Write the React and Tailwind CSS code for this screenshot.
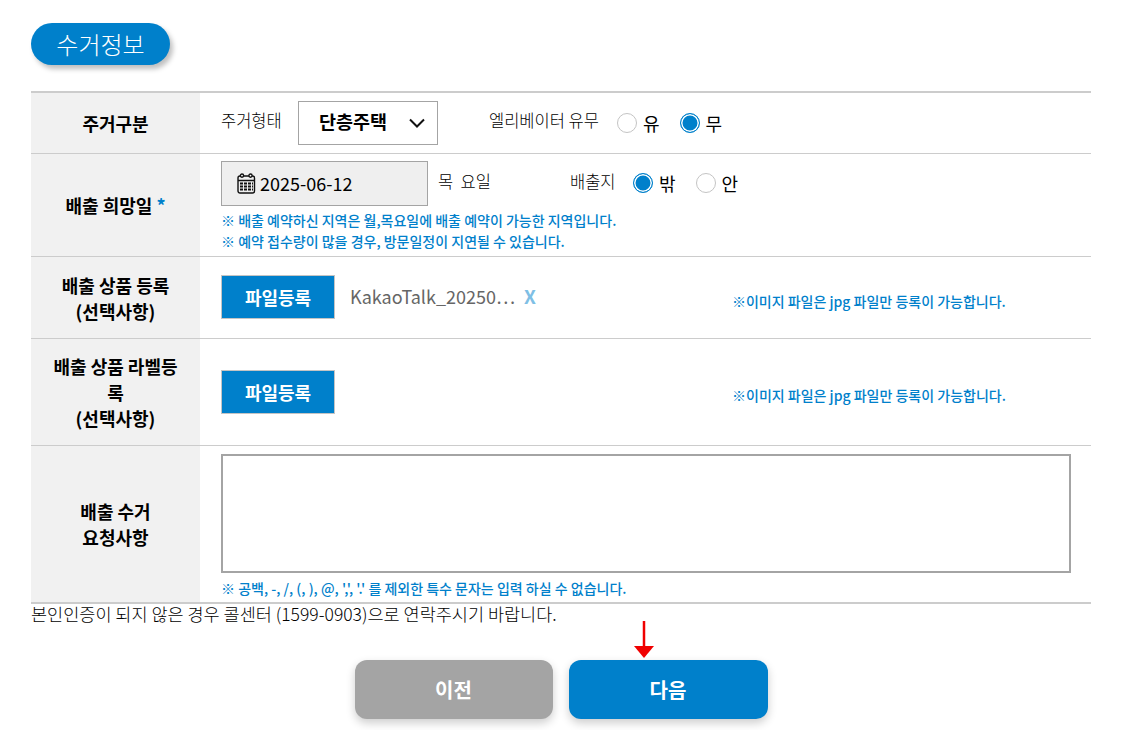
import React from 'react';

const CalendarIcon = () => (
  <svg width="19" height="21" viewBox="0 0 19 21" className="shrink-0" fill="none" stroke="#111" strokeWidth="1.4">
    <rect x="1" y="3" width="16.5" height="17" rx="2" />
    <circle cx="5" cy="2.6" r="1.6" fill="#fff" />
    <circle cx="13.5" cy="2.6" r="1.6" fill="#fff" />
    <path d="M1 7.5h16.5" strokeWidth="1.5" />
    <path d="M3 10.5h13M3 13.5h13M3 16.5h13" strokeWidth="1.8" strokeDasharray="3 1" />
  </svg>
);

const Radio = ({ checked, label }) => (
  <span className="flex items-center gap-[6px]">
    {checked ? (
      <span className="w-[20px] h-[20px] rounded-full border border-[#0080cb] bg-[#0080cb] shadow-[inset_0_0_0_1.5px_#fff]"></span>
    ) : (
      <span className="w-[20px] h-[20px] rounded-full border border-[#c4c4c4] bg-white"></span>
    )}
    <span className="text-[18px] text-black leading-none">{label}</span>
  </span>
);

const Row = ({ height, children, label, noBorder }) => (
  <div className={`flex ${height} ${noBorder ? '' : 'border-b border-[#cccccc]'}`}>
    <div className="w-[169px] shrink-0 bg-[#f1f1f1] flex items-center justify-center text-center text-[18px] leading-[26px] font-bold text-black px-[20px]">
      <div>{label}</div>
    </div>
    <div className="flex-1 min-w-0 pl-[21px]">{children}</div>
  </div>
);

const FileButton = () => (
  <button className="w-[114px] h-[44px] bg-[#0080cb] border border-[#c4c4c4] text-white text-[18px] font-bold">파일등록</button>
);

const Notice = ({ children, className }) => (
  <p className={`text-[14px] font-medium text-[#0080cb] leading-[20px] whitespace-nowrap ${className || ''}`}>{children}</p>
);

const App = () => {
  return (
    <div className="w-[1124px] h-[730px] overflow-hidden bg-white px-[31px] pt-[23px] font-['Noto_Sans_CJK_KR',sans-serif]">
      <div className="w-[139px] h-[42px] rounded-full bg-[#0080cb] shadow-[3px_4px_5px_rgba(0,0,0,0.25)] flex items-center justify-center text-white text-[24px] font-light">
        수거정보
      </div>

      <div className="w-[1060px] mt-[26px] border-t-2 border-[#cccccc]">
        <Row label="주거구분" height="h-[61px]">
          <div className="flex items-center h-full pb-[1px]">
            <span className="text-[16.5px] font-light text-black w-[77px] -translate-y-[2px] whitespace-nowrap">주거형태</span>
            <div className="w-[140px] h-[44px] border border-[#a4a4a4] flex items-center justify-between pl-[20px] pr-[12px]">
              <span className="text-[18.5px] font-bold text-black -translate-y-[1px]">단층주택</span>
              <svg width="16" height="10" viewBox="0 0 16 10" fill="none" stroke="#111" strokeWidth="2"><path d="M1 1.5l7 7 7-7" /></svg>
            </div>
            <span className="text-[16.5px] font-light text-black ml-[51px] w-[128px] -translate-y-[2px] whitespace-nowrap">엘리베이터 유무</span>
            <div className="flex items-center gap-[20px]">
              <Radio label="유" />
              <Radio checked label="무" />
            </div>
          </div>
        </Row>

        <Row label={<span>배출 희망일 <span className="text-[#0080cb]">*</span></span>} height="h-[103px]">
          <div className="pt-[7px]">
            <div className="flex items-start">
              <div className="w-[207px] h-[45px] border border-[#a4a4a4] bg-[#efefef] flex items-center gap-[4px] pl-[15px]">
                <CalendarIcon />
                <span className="text-[18px] text-black">2025-06-12</span>
              </div>
              <span className="text-[16.5px] font-light text-black ml-[10px] mt-[8px] w-[132px] leading-[24px]">목&nbsp; 요일</span>
              <span className="text-[16.5px] font-light text-black mt-[8px] w-[63px] leading-[24px]">배출지</span>
              <div className="flex items-center gap-[20px] mt-[12px]">
                <Radio checked label="밖" />
                <Radio label="안" />
              </div>
            </div>
            <Notice className="mt-[4px]">※ 배출 예약하신 지역은 월,목요일에 배출 예약이 가능한 지역입니다.</Notice>
            <Notice className="mt-[1px]">※ 예약 접수량이 많을 경우, 방문일정이 지연될 수 있습니다.</Notice>
          </div>
        </Row>

        <Row label={<>배출 상품 등록<br />(선택사항)</>} height="h-[82px]">
          <div className="flex items-start pt-[18px]">
            <FileButton />
            <span className="ml-[15px] mt-[8px] text-[18px] text-[#666666] leading-[26px] w-[172px] whitespace-nowrap overflow-hidden">KakaoTalk_20250⋯</span>
            <span className="mt-[9px] ml-[2px] text-[19px] font-bold text-[#7fbfe5] leading-[24px]">X</span>
            <Notice className="ml-[196px] mt-[16px]">※이미지 파일은 jpg 파일만 등록이 가능합니다.</Notice>
          </div>
        </Row>

        <Row label={<>배출 상품 라벨등록<br />(선택사항)</>} height="h-[107px]">
          <div className="flex items-start pt-[31px]">
            <FileButton />
            <Notice className="ml-[397px] mt-[15px]">※이미지 파일은 jpg 파일만 등록이 가능합니다.</Notice>
          </div>
        </Row>

        <Row label={<>배출 수거<br />요청사항</>} height="h-[156px]" noBorder>
          <div className="pt-[8px]">
            <textarea className="block w-[850px] h-[119px] border-2 border-[#a4a4a4] bg-white resize-none" />
            <Notice className="mt-[5px]">※ 공백, -, /, (, ), @, ',', '.' 를 제외한 특수 문자는 입력 하실 수 없습니다.</Notice>
          </div>
        </Row>
      </div>

      <div className="w-[1060px] border-t-2 border-[#cccccc]">
        <p className="text-[17.5px] font-light text-black leading-[20px] whitespace-nowrap">본인인증이 되지 않은 경우 콜센터 (1599-0903)으로 연락주시기 바랍니다.</p>
      </div>

      <div className="relative flex justify-center gap-[16px] mt-[36px] w-[1060px]">
        <svg width="22" height="38" viewBox="0 0 22 38" className="absolute left-[602px] -top-[39px]">
          <path d="M11 0v26" stroke="#f00000" strokeWidth="2.5" />
          <path d="M1 25h20L11 37z" fill="#f00000" />
        </svg>
        <button className="w-[198px] h-[59px] rounded-[12px] bg-[#a4a4a4] text-white text-[20px] font-bold shadow-[0_4px_10px_rgba(0,0,0,0.2)]">이전</button>
        <button className="w-[199px] h-[59px] rounded-[12px] bg-[#0080cb] text-white text-[20px] font-bold shadow-[0_4px_10px_rgba(0,0,0,0.2)]">다음</button>
      </div>
    </div>
  );
};

export default App;
